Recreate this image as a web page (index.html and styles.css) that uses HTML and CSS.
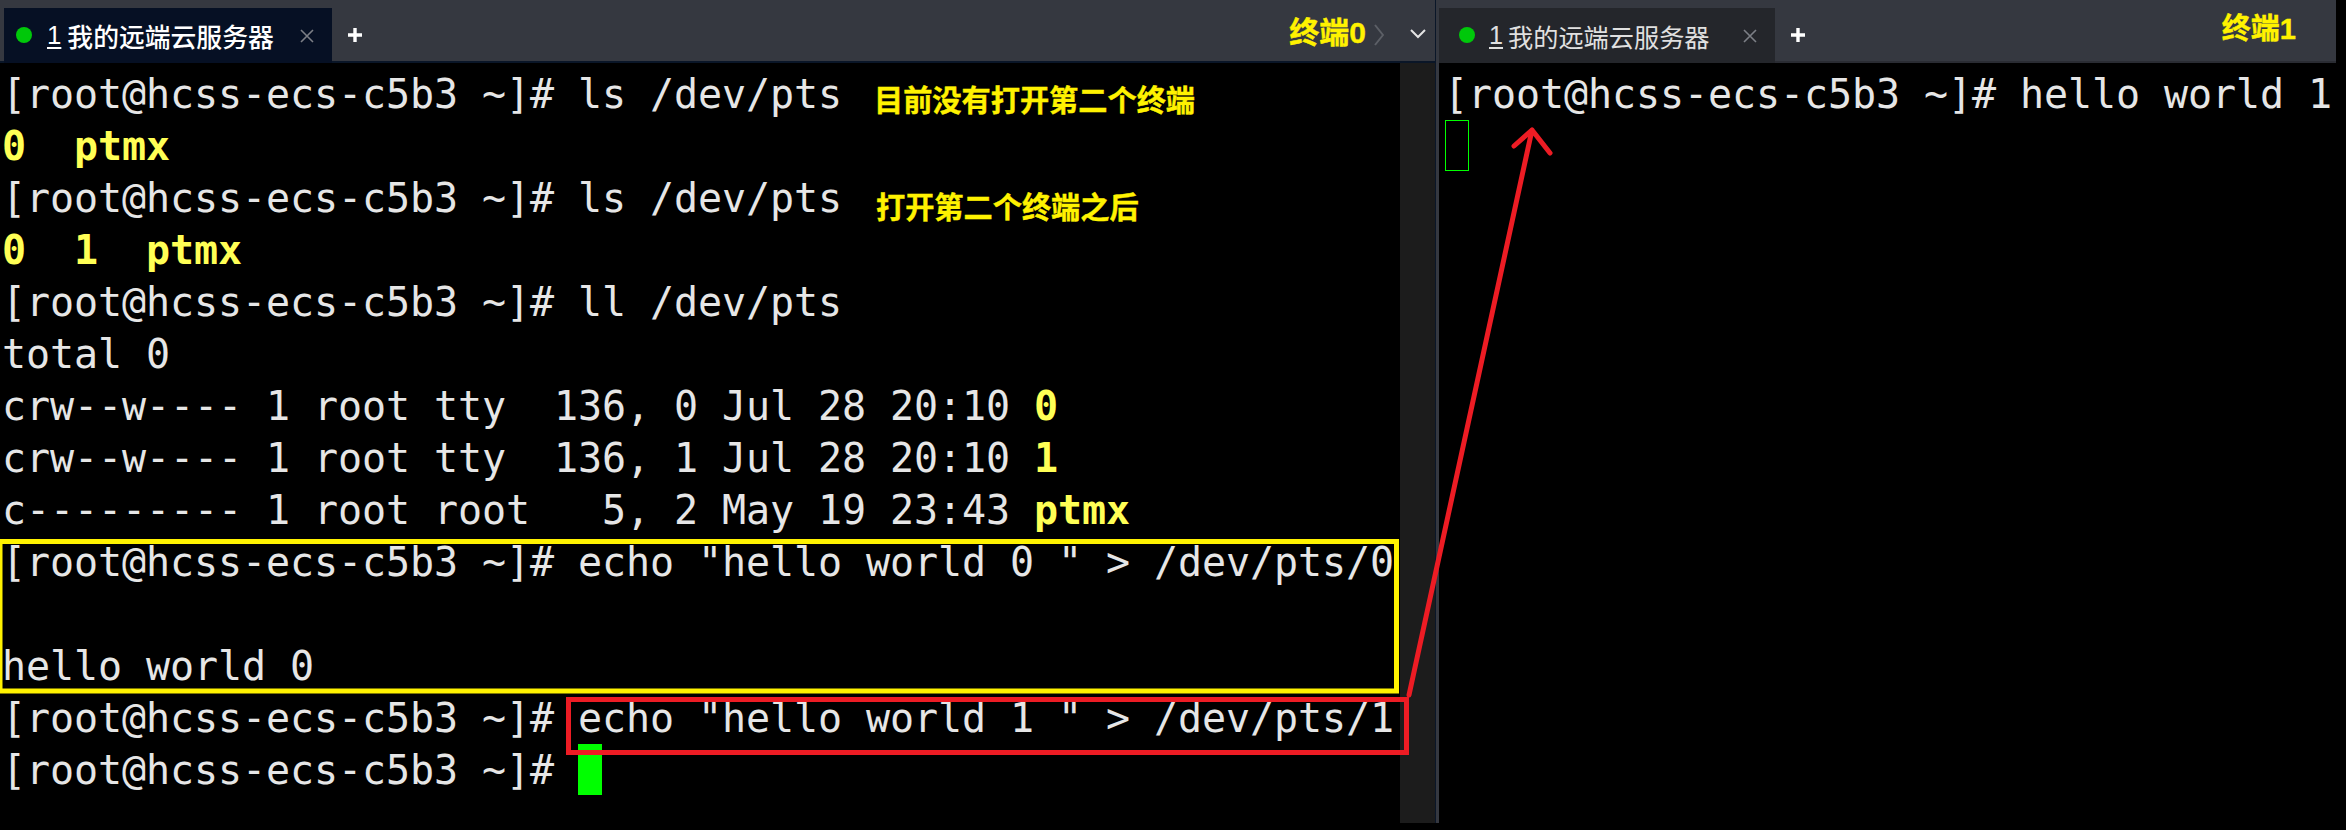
FILE: index.html
```html
<!DOCTYPE html>
<html lang="zh">
<head>
<meta charset="utf-8">
<title>我的远端云服务器</title>
<link rel="stylesheet" href="styles.css">
</head>
<body>
<div class="app">
  <section class="pane pane-left">
    <header class="tabbar tabbar-left">
      <div class="tab tab-active">
        <span class="dot"></span>
        <span class="num">1</span>
        <span class="title">我的远端云服务器</span>
        <svg class="close" viewBox="0 0 14 14"><path d="M1 1 13 13M13 1 1 13"/></svg>
      </div>
      <svg class="plus" viewBox="0 0 16 16"><path d="M8 1V15M1 8H15"/></svg>
      <span class="term-name name-0">终端0</span>
      <svg class="chev-right" viewBox="0 0 10 22"><path d="M1 1 9 11 1 21"/></svg>
      <svg class="chev-down" viewBox="0 0 16 10"><path d="M1 1 8 8 15 1"/></svg>
    </header>
    <div class="term-wrap">
      <div class="term">
        <div class="row">[root@hcss-ecs-c5b3 ~]# ls /dev/pts</div>
        <div class="row"><b>0</b>  <b>ptmx</b></div>
        <div class="row">[root@hcss-ecs-c5b3 ~]# ls /dev/pts</div>
        <div class="row"><b>0</b>  <b>1</b>  <b>ptmx</b></div>
        <div class="row">[root@hcss-ecs-c5b3 ~]# ll /dev/pts</div>
        <div class="row">total 0</div>
        <div class="row">crw--w---- 1 root tty  136, 0 Jul 28 20:10 <b>0</b></div>
        <div class="row">crw--w---- 1 root tty  136, 1 Jul 28 20:10 <b>1</b></div>
        <div class="row">c--------- 1 root root   5, 2 May 19 23:43 <b>ptmx</b></div>
        <div class="row">[root@hcss-ecs-c5b3 ~]# echo "hello world 0 " &gt; /dev/pts/0</div>
        <div class="row"> </div>
        <div class="row">hello world 0</div>
        <div class="row">[root@hcss-ecs-c5b3 ~]# echo "hello world 1 " &gt; /dev/pts/1</div>
        <div class="row">[root@hcss-ecs-c5b3 ~]# <span class="cursor"></span></div>
      </div>
      <div class="scrollbar"></div>
    </div>
  </section>
  <div class="divider"></div>
  <section class="pane pane-right">
    <header class="tabbar tabbar-right">
      <div class="tab tab-idle">
        <span class="dot"></span>
        <span class="num">1</span>
        <span class="title">我的远端云服务器</span>
        <svg class="close" viewBox="0 0 14 14"><path d="M1 1 13 13M13 1 1 13"/></svg>
      </div>
      <svg class="plus" viewBox="0 0 16 16"><path d="M8 1V15M1 8H15"/></svg>
      <span class="term-name name-1">终端1</span>
    </header>
    <div class="term term-right">
      <div class="row">[root@hcss-ecs-c5b3 ~]# hello world 1</div>
      <div class="row"><span class="cursor cursor-hollow"></span></div>
    </div>
  </section>

  <span class="note note-a">目前没有打开第二个终端</span>
  <span class="note note-b">打开第二个终端之后</span>
  <svg class="marks" viewBox="0 0 2346 830">
    <rect class="mark-yellow" x="0" y="541.5" width="1396.5" height="149.5"/>
    <rect class="mark-red" x="568.5" y="699.5" width="838" height="53"/>
    <path class="mark-arrow" d="M1409 695 1532 130M1514 146 1532 130 1550 153"/>
  </svg>
</div>
</body>
</html>
```
FILE: styles.css
```css
html, body {
  margin: 0;
  padding: 0;
  background: #000;
}
.app {
  position: relative;
  display: flex;
  width: 2346px;
  height: 830px;
  overflow: hidden;
  background: #000;
}
.pane {
  display: flex;
  flex-direction: column;
  height: 823px;
}
.pane-left {
  width: 1435px;
}
.pane-right {
  width: 897px;
}
.divider {
  width: 4px;
  height: 823px;
  background: #353840;
  border-left: 1px solid #0a1628;
  box-sizing: border-box;
}
.tabbar {
  display: flex;
  align-items: flex-start;
  flex: none;
  box-sizing: border-box;
  height: 63px;
  background: #353840;
  border-bottom: 2px solid #2a2c33;
}
.tabbar-left {
  padding-left: 4px;
  border-bottom-color: #0a1628;
}
.tab {
  display: flex;
  align-items: center;
  box-sizing: border-box;
  height: 55px;
  margin-top: 8px;
  font-family: "Noto Sans CJK SC", "Liberation Sans", sans-serif;
}
.tab-active {
  width: 328px;
  padding: 0 18px 0 12px;
  background: #061024;
  color: #fff;
  font-size: 25.8px;
  font-weight: 500;
}
.tab-idle {
  width: 336px;
  padding: 0 18px 0 20px;
  background: #24262b;
  color: #e0e0e0;
  font-size: 25.2px;
}
.dot {
  flex: none;
  width: 16px;
  height: 16px;
  margin-top: -1px;
  border-radius: 50%;
  background: #00c80a;
}
.num {
  margin-left: 15px;
  font-family: "Liberation Sans", sans-serif;
  text-decoration: underline;
  text-underline-offset: 3px;
}
.title {
  margin-left: 6px;
}
.tab-idle .num {
  margin-left: 14px;
}
.tab-idle .title {
  margin-left: 5px;
}
.close {
  width: 14px;
  height: 14px;
  margin-left: auto;
  fill: none;
  stroke: #7c7f86;
  stroke-width: 1.6;
}
.plus {
  width: 16px;
  height: 16px;
  margin: 27px 0 0 15px;
  fill: none;
  stroke: #fff;
  stroke-width: 3.4;
}
.term-name {
  color: #fff200;
  font-family: "Liberation Sans", "Noto Sans CJK SC", sans-serif;
  font-size: 29px;
  line-height: 36px;
  font-weight: 700;
  -webkit-text-stroke: 0.4px #fff200;
}
.name-0 {
  margin: 15px 0 0 auto;
  font-size: 30px;
}
.name-1 {
  margin: 11px 0 0 auto;
  margin-right: 40px;
}
.chev-right {
  width: 10px;
  height: 22px;
  margin: 24px 0 0 8px;
  fill: none;
  stroke: #5c5f66;
  stroke-width: 2;
}
.chev-down {
  width: 16px;
  height: 10px;
  margin: 29px 9px 0 26px;
  fill: none;
  stroke: #e4e4e4;
  stroke-width: 2;
}
.term-wrap {
  display: flex;
  flex: 1;
  min-height: 0;
}
.term {
  flex: 1;
  box-sizing: border-box;
  padding: 5px 0 0 2px;
  background: #000;
  color: #e6e6e6;
  font-family: "DejaVu Sans Mono", monospace;
  font-size: 40px;
  line-height: 52px;
  letter-spacing: -0.08px;
}
.term-right {
  padding-left: 5px;
}
.row {
  height: 52px;
  white-space: pre;
}
.row b {
  color: #ffff55;
  font-weight: 700;
}
.cursor {
  display: inline-block;
  box-sizing: border-box;
  width: 24px;
  height: 51px;
  vertical-align: top;
  background: #00ff00;
}
.cursor-hollow {
  margin-left: 1px;
  background: transparent;
  border: 1.5px solid #00ff00;
}
.scrollbar {
  flex: none;
  width: 35px;
  background: #1c1c1c;
}
.note {
  position: absolute;
  color: #fff200;
  font-family: "Noto Sans CJK SC", sans-serif;
  font-size: 29.2px;
  line-height: 40px;
  font-weight: 700;
  -webkit-text-stroke: 0.4px #fff200;
}
.note-a {
  left: 874px;
  top: 78px;
}
.note-b {
  left: 876px;
  top: 185px;
}
.marks {
  position: absolute;
  left: 0;
  top: 0;
  width: 2346px;
  height: 830px;
  fill: none;
  pointer-events: none;
}
.mark-yellow {
  stroke: #fff200;
  stroke-width: 5;
}
.mark-red {
  stroke: #ed1c24;
  stroke-width: 5;
}
.mark-arrow {
  stroke: #ed1c24;
  stroke-width: 5;
  stroke-linecap: round;
  stroke-linejoin: round;
}
```
